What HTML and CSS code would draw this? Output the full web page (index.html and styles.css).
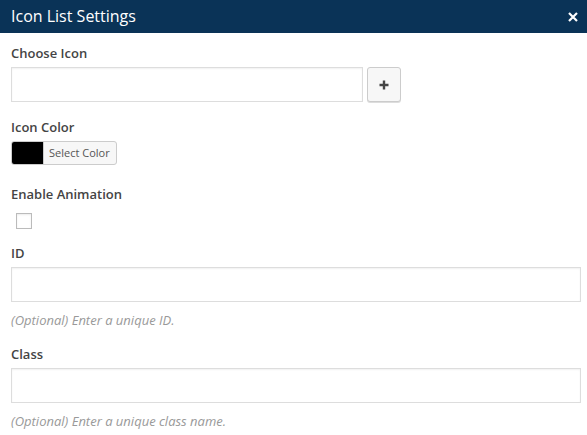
FILE: index.html
```html
<!DOCTYPE html>
<html>
<head>
<meta charset="utf-8">
<link rel="stylesheet" href="styles.css">
</head>
<body>
<div class="dialog">
  <div class="header">
    <span class="title">Icon List Settings</span>
    <span class="close"><svg width="10" height="10" viewBox="0 0 10 10"><path d="M1 1L9 9M9 1L1 9" stroke="#fff" stroke-width="2.2"/></svg></span>
  </div>
  <div class="body">
    <div class="field f-icon">
      <label class="label">Choose Icon</label>
      <div class="icon-row">
        <div class="input icon-input"></div>
        <div class="plus-btn"><svg width="10" height="10" viewBox="0 0 10 10"><path d="M5 0.5V9.5M0.5 5H9.5" stroke="#444" stroke-width="2.4"/></svg></div>
      </div>
    </div>
    <div class="field f-color">
      <label class="label">Icon Color</label>
      <div class="color-btn"><span class="swatch"></span><span class="color-text">Select Color</span></div>
    </div>
    <div class="field f-anim">
      <label class="label">Enable Animation</label>
      <div class="checkbox"></div>
    </div>
    <div class="field f-id">
      <label class="label">ID</label>
      <div class="input wide"></div>
      <p class="help">(Optional) Enter a unique ID.</p>
    </div>
    <div class="field f-class">
      <label class="label">Class</label>
      <div class="input wide"></div>
      <p class="help">(Optional) Enter a unique class name.</p>
    </div>
  </div>
</div>
</body>
</html>
```

FILE: styles.css
```css
* { box-sizing: border-box; }
html, body { margin: 0; padding: 0; background: #fff; }
body { font-family: "Open Sans", "Noto Sans", sans-serif; color: #333; }
.dialog { width: 587px; height: 435px; overflow: hidden; }
.header {
  height: 33px;
  background: #0a3357;
  display: flex;
  align-items: center;
  justify-content: space-between;
  padding: 0 9px 0 11px;
}
.title { color: #fff; font-size: 16px; line-height: 33px; }
.close { display: flex; width: 10px; height: 10px; margin-top: 1px; }
.body { padding: 11px 6px 0 11px; display: flex; flex-direction: column; }
.field { display: flex; flex-direction: column; align-items: flex-start; }
.label { font-size: 13px; font-weight: 600; line-height: 18px; color: #444; margin-bottom: 5px; }
.icon-row { display: flex; gap: 4px; align-items: stretch; }
.input {
  height: 35px;
  border: 1px solid #ddd;
  background: #fff;
  box-shadow: inset 0 1px 2px rgba(0,0,0,0.06);
}
.icon-input { width: 352px; }
.plus-btn {
  width: 34px;
  height: 35px;
  border: 1px solid #ccc;
  border-radius: 3px;
  background: #f7f7f7;
  display: flex;
  align-items: center;
  justify-content: center;
  box-shadow: 0 1px 0 #ddd;
}
.f-color { margin-top: 16px; }
.color-btn {
  display: flex;
  height: 24px;
  border: 1px solid #ccc;
  border-radius: 3px;
  overflow: hidden;
  background: #f7f7f7;
}
.swatch { width: 31px; background: #000; }
.color-text { font-size: 11px; color: #555; line-height: 22px; padding: 0 6px 0 5px; border-left: 1px solid #ccc; }
.f-anim { margin-top: 20px; }
.f-anim .label { margin-bottom: 10px; }
.checkbox { width: 16px; height: 16px; border: 1px solid #bbb; margin-left: 5px; background: #fff; box-shadow: inset 0 1px 2px rgba(0,0,0,0.08); }
.f-id { margin-top: 15px; }
.wide { width: 570px; }
.help { margin: 10px 0 0; font-size: 13px; font-style: italic; color: #999; line-height: 17px; }
.f-class { margin-top: 16px; }
```
